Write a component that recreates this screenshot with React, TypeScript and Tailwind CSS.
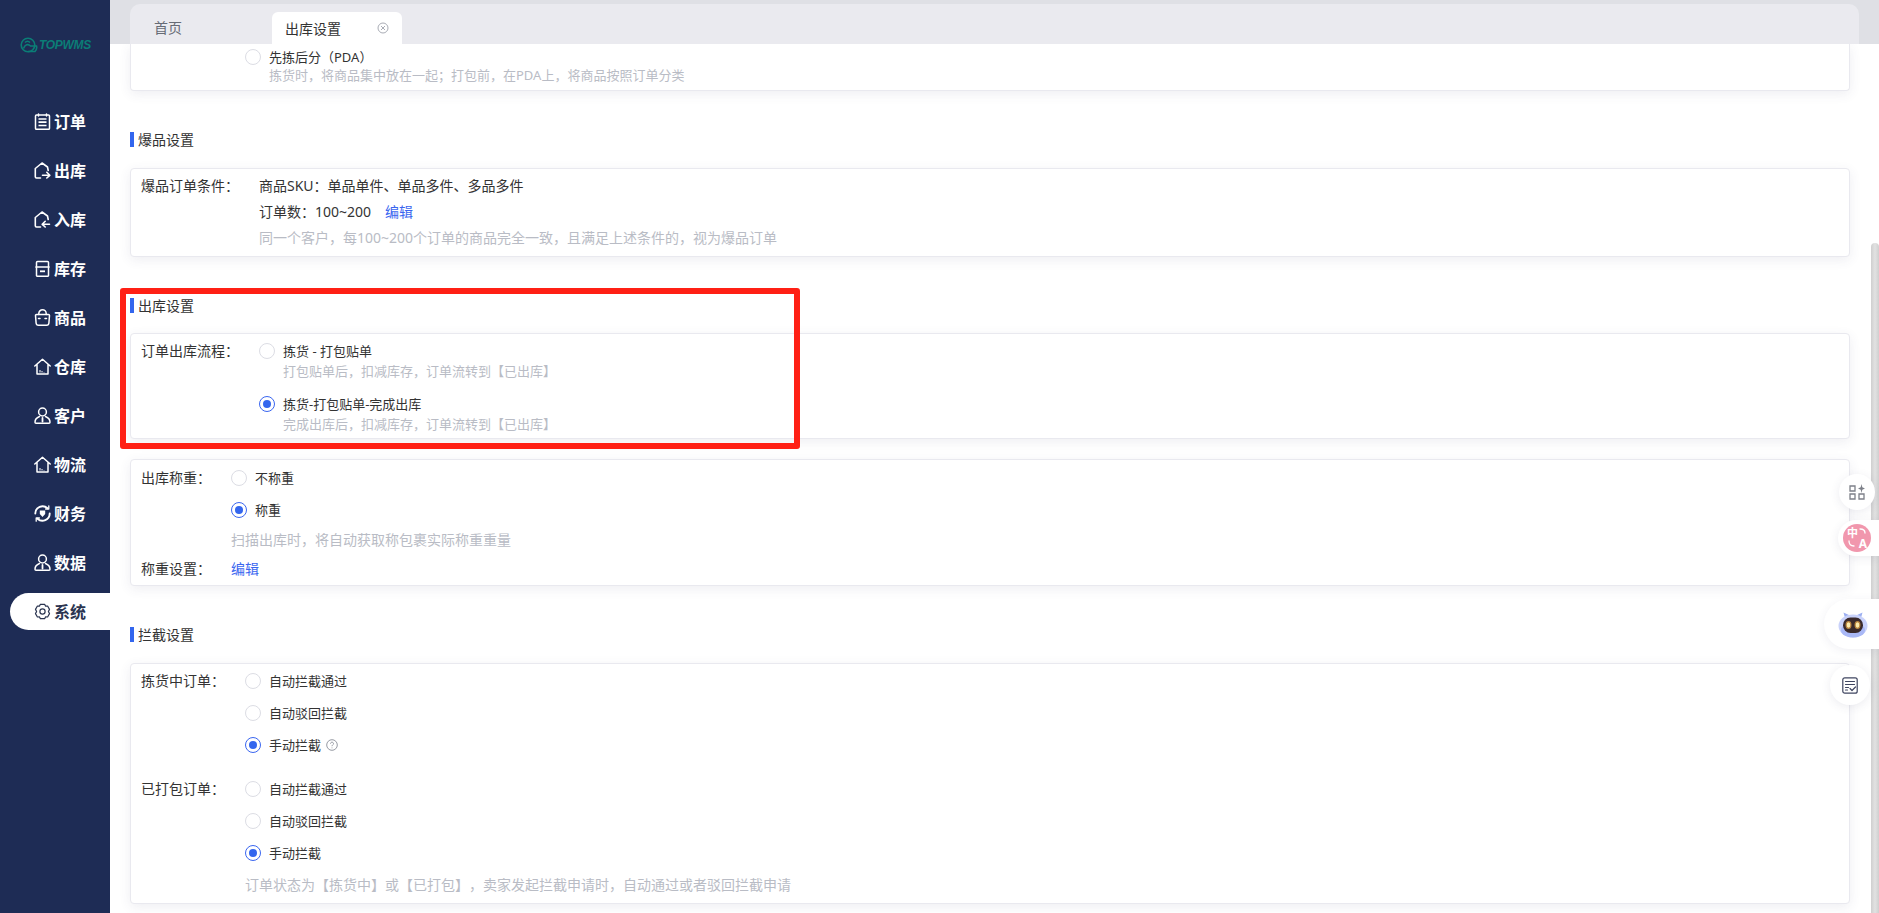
import React from 'react';

const FONT = '"Noto Sans", "Noto Sans CJK SC", sans-serif';

const iconBase = {
  width: 17,
  height: 17,
  viewBox: '0 0 17 17',
  fill: 'none',
  stroke: 'currentColor',
  strokeWidth: 1.5,
  strokeLinecap: 'round' as const,
  strokeLinejoin: 'round' as const,
};

const OrderIcon = () => (
  <svg {...iconBase}>
    <rect x="1.500" y="2" width="14" height="14.300" rx="1" />
    <path d="M4.500 1v2M12.500 1v2" />
    <path d="M4.500 6h8M4.500 9.200h8M4.500 12.500h8" strokeLinecap="butt" strokeWidth="1.700" />
  </svg>
);
const OutIcon = () => (
  <svg {...iconBase} strokeWidth={1.6}>
    <path d="M6.500 16H2.500a1.200 1.200 0 0 1-1.200-1.200V6.500L8 1l5.500 4 .7 3.500" />
    <path d="M8.500 13.300h7M12.800 10.300l3 3-3 2.700" />
  </svg>
);
const InIcon = () => (
  <svg {...iconBase} strokeWidth={1.6}>
    <path d="M6.500 16H2.500a1.200 1.200 0 0 1-1.200-1.200V6.500L8 1l5.500 4 .7 3.500" />
    <path d="M15.500 13.300h-7M11.200 10.300l-3 3 3 2.700" />
  </svg>
);
const StockIcon = () => (
  <svg {...iconBase}>
    <path d="M2.500 7V2.500a1 1 0 0 1 1-1h10a1 1 0 0 1 1 1V7zM1.800 7h13.400M2.500 7v8.500a.8.8 0 0 0 .8.8h10.400a.8.8 0 0 0 .8-.8V7" />
    <path d="M6 11.300h5" strokeWidth="1.800" strokeLinecap="butt" />
  </svg>
);
const GoodsIcon = () => (
  <svg {...iconBase}>
    <path d="M1.500 6.500a1 1 0 0 1 1-1h12a1 1 0 0 1 1 1l-.6 7.500a2.400 2.400 0 0 1-2.400 2.200h-8a2.400 2.400 0 0 1-2.400-2.200z" />
    <path d="M4.800 5.500V4.500a3.700 3.700 0 0 1 7.400 0v1M4.500 9.500h1.500M11 9.500h1.500" />
  </svg>
);
const HomeIcon = () => (
  <svg {...iconBase}>
    <path d="M.8 8 8.500 1.300 16.200 8M3 6.500v9.500h11V6.500" />
    <path d="M6 14.500v-2.500M8 14.500v-1.500M10 14.500V14" strokeWidth="1" strokeLinecap="butt" />
  </svg>
);
const PersonIcon = () => (
  <svg {...iconBase}>
    <circle cx="8.500" cy="5" r="3.900" />
    <path d="M5.500 9.500C3 10.500 1 12.800 1 15.200c0 .6.400 1 1 1h13c.6 0 1-.4 1-1 0-2.400-2-4.700-4.500-5.700" />
    <path d="M8.500 11v3.500" strokeWidth="1.800" />
  </svg>
);
const MoneyIcon = () => (
  <svg {...iconBase} strokeWidth={1.9}>
    <path d="M1.300 8.500A7.200 7.200 0 0 1 13.500 3.300" />
    <path d="M15.700 8.500A7.200 7.200 0 0 1 3.500 13.700" />
    <path d="M14.800 .8v3.200h-3.200M2.200 16.200V13h3.200" strokeWidth="1.300" />
    <path d="M5.800 5.500h5.400v3.500L8.500 12 5.800 9z" fill="currentColor" stroke="none" />
  </svg>
);
const GearIcon = () => (
  <svg {...iconBase} strokeWidth={1.200}>
    <path d="M6.400 1.300h4.200l1 1.800 2-.1 1.900 3.400-1.100 2.100 1.100 2.100-1.900 3.400-2-.1-1 1.800H6.400l-1-1.800-2 .1L1.500 10.600l1.100-2.100L1.500 6.400 3.400 3l2 .1z" />
    <circle cx="8.500" cy="8.500" r="2.600" />
  </svg>
);

const navItems = [
  { label: '订单', icon: <OrderIcon /> },
  { label: '出库', icon: <OutIcon /> },
  { label: '入库', icon: <InIcon /> },
  { label: '库存', icon: <StockIcon /> },
  { label: '商品', icon: <GoodsIcon /> },
  { label: '仓库', icon: <HomeIcon /> },
  { label: '客户', icon: <PersonIcon /> },
  { label: '物流', icon: <HomeIcon /> },
  { label: '财务', icon: <MoneyIcon /> },
  { label: '数据', icon: <PersonIcon /> },
  { label: '系统', icon: <GearIcon />, active: true },
];

const Sidebar = () => (
  <aside className="w-[110px] shrink-0 h-full bg-[#1e2c55] flex flex-col">
    <div className="h-[90px] pt-[37px] pl-[20px] flex items-start gap-[1px] text-[#0b7d76]">
      <svg width="18" height="16" viewBox="0 0 18 16" fill="none" stroke="currentColor" strokeWidth="1.600">
        <circle cx="8" cy="8" r="6.800" />
        <path d="M3.500 11.500C5 7.500 8 6.500 10.500 9h6c.500 2 0 4-1.500 5.500H8M5 5.500c1.500-1.500 3.500-1.500 5 0" />
      </svg>
      <span className="text-[12px] leading-[16px] font-bold italic tracking-[-0.3px]" style={{ fontFamily: '"Liberation Sans", sans-serif' }}>
        TOPWMS
      </span>
    </div>
    <nav className="flex flex-col gap-[12px] pl-[10px] pt-[13px]">
      {navItems.map((item) => (
        <div
          key={item.label}
          className={`h-[37px] pl-[24px] flex items-center gap-[3px] rounded-l-[19px] text-[16px] font-bold ${
            item.active ? 'bg-white text-[#2b3550]' : 'text-white'
          }`}
        >
          <span className="w-[17px] flex items-center justify-center">{item.icon}</span>
          <span>{item.label}</span>
        </div>
      ))}
    </nav>
  </aside>
);

const Radio = ({ checked }: { checked?: boolean }) => (
  <span
    className={`w-[16px] h-[16px] shrink-0 rounded-full border flex items-center justify-center bg-white ${
      checked ? 'border-[#3a66f0]' : 'border-[#dcdde4]'
    }`}
  >
    {checked && <span className="w-[8px] h-[8px] rounded-full bg-[#3366ee]" />}
  </span>
);

const RadioRow = ({ checked, children }: { checked?: boolean; children: React.ReactNode }) => (
  <div className="h-[32px] flex items-center gap-[8px] text-[13px] text-[#333]">
    <Radio checked={checked} />
    <span className="flex items-center gap-[5px]">{children}</span>
  </div>
);

const Card = ({ className, children }: { className?: string; children: React.ReactNode }) => (
  <section
    className={`border border-[#e9e9ef] rounded-[4px] bg-white shadow-[0_3px_12px_rgba(70,70,110,0.09)] ${className ?? ''}`}
  >
    {children}
  </section>
);

const SectionTitle = ({ className, children }: { className?: string; children: React.ReactNode }) => (
  <h2 className={`h-[15px] flex items-center gap-[4px] text-[14px] font-normal text-[#333] ${className ?? ''}`}>
    <span className="w-[4px] h-[15px] bg-[#3366ee]" />
    <span>{children}</span>
  </h2>
);

const Hint = ({ children, className }: { children: React.ReactNode; className?: string }) => (
  <div className={`text-[#b9bcc5] ${className ?? ''}`}>{children}</div>
);

const Tabs = () => (
  <header className="h-[44px] bg-[#dfe0e5] pt-[4px] pl-[20px] pr-[20px] relative z-10">
    <div className="h-[40px] bg-[#eaeaef] rounded-t-[10px] pt-[8px] pl-[24px] flex items-stretch text-[14px]">
      <div className="w-[118px] pt-[4px] leading-[24px] text-[#666b75]">首页</div>
      <div className="w-[130px] bg-white rounded-t-[6px] pl-[13px] pr-[13px] flex items-center justify-between text-[#333]">
        <span>出库设置</span>
        <svg width="12" height="12" viewBox="0 0 12 12" fill="none" stroke="#a9acb5" strokeWidth="1">
          <circle cx="6" cy="6" r="5" />
          <path d="M4 4l4 4M8 4l-4 4" />
        </svg>
      </div>
    </div>
  </header>
);

const Content = () => (
  <div className="pl-[20px] pr-[29px] text-[14px] leading-[20px]">
    <Card className="h-[47px] pl-[114px] rounded-t-none border-t-0">
      <div className="h-[23px] pt-[3px] flex items-center gap-[8px] text-[13px] text-[#333]">
        <Radio />
        <span>先拣后分（PDA）</span>
      </div>
      <Hint className="pl-[24px] text-[13px] leading-[17px]">拣货时，将商品集中放在一起；打包前，在PDA上，将商品按照订单分类</Hint>
    </Card>

    <SectionTitle className="mt-[41px]">爆品设置</SectionTitle>
    <Card className="mt-[21px] h-[89px] pt-[4px] pl-[10px] flex leading-[26px] text-[#333]">
      <div className="w-[118px] shrink-0">爆品订单条件：</div>
      <div>
        <div>商品SKU：单品单件、单品多件、多品多件</div>
        <div>
          订单数：100~200<a className="ml-[14px] text-[#3a66f0]">编辑</a>
        </div>
        <Hint>同一个客户，每100~200个订单的商品完全一致，且满足上述条件的，视为爆品订单</Hint>
      </div>
    </Card>

    <SectionTitle className="mt-[41px]">出库设置</SectionTitle>
    <Card className="mt-[20px] h-[106px] pt-[7px] pl-[10px] flex text-[#333]">
      <div className="w-[118px] shrink-0">订单出库流程：</div>
      <div className="text-[13px]">
        <div className="flex items-center gap-[8px]">
          <Radio />
          <span>拣货 - 打包贴单</span>
        </div>
        <Hint className="pl-[24px]">打包贴单后，扣减库存，订单流转到【已出库】</Hint>
        <div className="mt-[13px] flex items-center gap-[8px]">
          <Radio checked />
          <span>拣货-打包贴单-完成出库</span>
        </div>
        <Hint className="pl-[24px]">完成出库后，扣减库存，订单流转到【已出库】</Hint>
      </div>
    </Card>

    <Card className="mt-[20px] h-[127px] pt-[2px] pl-[10px] text-[#333]">
      <div className="flex">
        <div className="w-[90px] shrink-0 leading-[32px]">出库称重：</div>
        <div>
          <RadioRow>不称重</RadioRow>
          <RadioRow checked>称重</RadioRow>
          <Hint className="leading-[28px]">扫描出库时，将自动获取称包裹实际称重重量</Hint>
        </div>
      </div>
      <div className="flex leading-[29px]">
        <div className="w-[90px] shrink-0">称重设置：</div>
        <a className="text-[#3a66f0]">编辑</a>
      </div>
    </Card>

    <SectionTitle className="mt-[41px]">拦截设置</SectionTitle>
    <Card className="mt-[21px] h-[241px] pt-[1px] pl-[10px] text-[#333]">
      <div className="flex">
        <div className="w-[104px] shrink-0 leading-[32px]">拣货中订单：</div>
        <div>
          <RadioRow>自动拦截通过</RadioRow>
          <RadioRow>自动驳回拦截</RadioRow>
          <RadioRow checked>
            手动拦截
            <svg width="12" height="12" viewBox="0 0 12 12" fill="none" stroke="#8b8f99" strokeWidth="0.9">
              <circle cx="6" cy="6" r="5.300" />
              <path d="M4.500 4.700c0-2 3-2 3 0 0 1.200-1.500 1.200-1.500 2.500M6 8.500v.8" />
            </svg>
          </RadioRow>
        </div>
      </div>
      <div className="flex mt-[12px]">
        <div className="w-[104px] shrink-0 leading-[32px]">已打包订单：</div>
        <div>
          <RadioRow>自动拦截通过</RadioRow>
          <RadioRow>自动驳回拦截</RadioRow>
          <RadioRow checked>手动拦截</RadioRow>
          <Hint className="leading-[32px]">订单状态为【拣货中】或【已打包】，卖家发起拦截申请时，自动通过或者驳回拦截申请</Hint>
        </div>
      </div>
    </Card>
  </div>
);

const FloatingTools = () => (
  <>
    <div className="absolute left-[1729px] top-[474px] w-[36px] h-[36px] rounded-full bg-white shadow-[0_2px_10px_rgba(70,70,110,0.1)] flex items-center justify-center">
      <svg width="16" height="16" viewBox="0 0 16 16" fill="none" stroke="#7d8089" strokeWidth="1.300">
        <path d="M1 2h5v5H1zM1 10h5v5H1zM10 10h5v5h-5z" />
        <path d="M12.500 0 13.300 3.200 16 4.500 13.300 5.800 12.500 9 11.700 5.800 9 4.500 11.700 3.200z" fill="#7d8089" stroke="none" />
      </svg>
    </div>
    <div className="absolute left-[1728px] top-[520px] w-[41px] h-[36px] rounded-l-[18px] bg-white shadow-[0_2px_10px_rgba(70,70,110,0.1)] flex items-center pl-[5px]">
      <div className="relative w-[28px] h-[28px] rounded-full bg-[#f197ad] text-white font-bold">
        <span className="absolute left-[4px] top-[3px] text-[11px] leading-[12px]">中</span>
        <span className="absolute right-[4px] bottom-[2px] text-[12px] leading-[13px]">A</span>
        <svg width="28" height="28" viewBox="0 0 28 28" fill="none" stroke="white" strokeWidth="1.300" strokeLinecap="round" className="absolute inset-0">
          <path d="M17 5c3 0 5 1.500 5 4M6 17c0 3 2 5 5 5" />
        </svg>
      </div>
    </div>
    <div className="absolute left-[1714px] top-[599px] w-[55px] h-[50px] rounded-l-[25px] bg-white shadow-[0_2px_10px_rgba(70,70,110,0.08)] flex items-center pl-[14px]">
      <svg width="30" height="27" viewBox="0 0 30 27">
        <path d="M7 7 5.500 1.500 12 4.500zM23 7l1.500-5.500L18 4.500z" fill="#9db0f2" />
        <ellipse cx="15" cy="15" rx="14.500" ry="11.500" fill="#c9d2fa" />
        <ellipse cx="15" cy="19" rx="12" ry="7.500" fill="#a9b8f6" />
        <rect x="5" y="6.500" width="20" height="15.500" rx="7.500" fill="#3a2a2c" />
        <ellipse cx="10.500" cy="14" rx="3" ry="4" fill="#b9853f" />
        <ellipse cx="19.500" cy="14" rx="3" ry="4" fill="#b9853f" />
        <ellipse cx="10.500" cy="14" rx="1.800" ry="2.700" fill="#fbe9ab" />
        <ellipse cx="19.500" cy="14" rx="1.800" ry="2.700" fill="#fbe9ab" />
      </svg>
    </div>
    <div className="absolute left-[1720px] top-[665px] w-[40px] h-[40px] rounded-full bg-white shadow-[0_2px_10px_rgba(70,70,110,0.1)] flex items-center justify-center">
      <svg width="16" height="17" viewBox="0 0 16 17" fill="none" stroke="#3f4560" strokeWidth="1.200" strokeLinecap="round" strokeLinejoin="round">
        <rect x="0.800" y="0.800" width="14.400" height="15.400" rx="2" />
        <path d="M3.500 4.500h9M3.500 7.500h9M3.500 10.500h3M3.500 13h2M8 11.500l2 2 3.500-3.500" />
      </svg>
    </div>
  </>
);

export default function App() {
  return (
    <div className="w-[1879px] h-[913px] flex overflow-hidden bg-white [text-spacing-trim:space-all]" style={{ fontFamily: FONT }}>
      <Sidebar />
      <main className="flex-1 relative overflow-hidden">
        <Tabs />
        <Content />
        {/* annotation box from the screenshot */}
        <div className="absolute left-[10px] top-[288px] w-[680px] h-[161px] border-[6px] border-[#ff2015] rounded-[3px]" />
        <div className="absolute right-0 top-[243px] bottom-0 w-[8px] rounded-t-[4px] bg-gradient-to-r from-[#cfcfcf] via-[#e2e2e2] to-[#cfcfcf]" />
        <FloatingTools />
      </main>
    </div>
  );
}
